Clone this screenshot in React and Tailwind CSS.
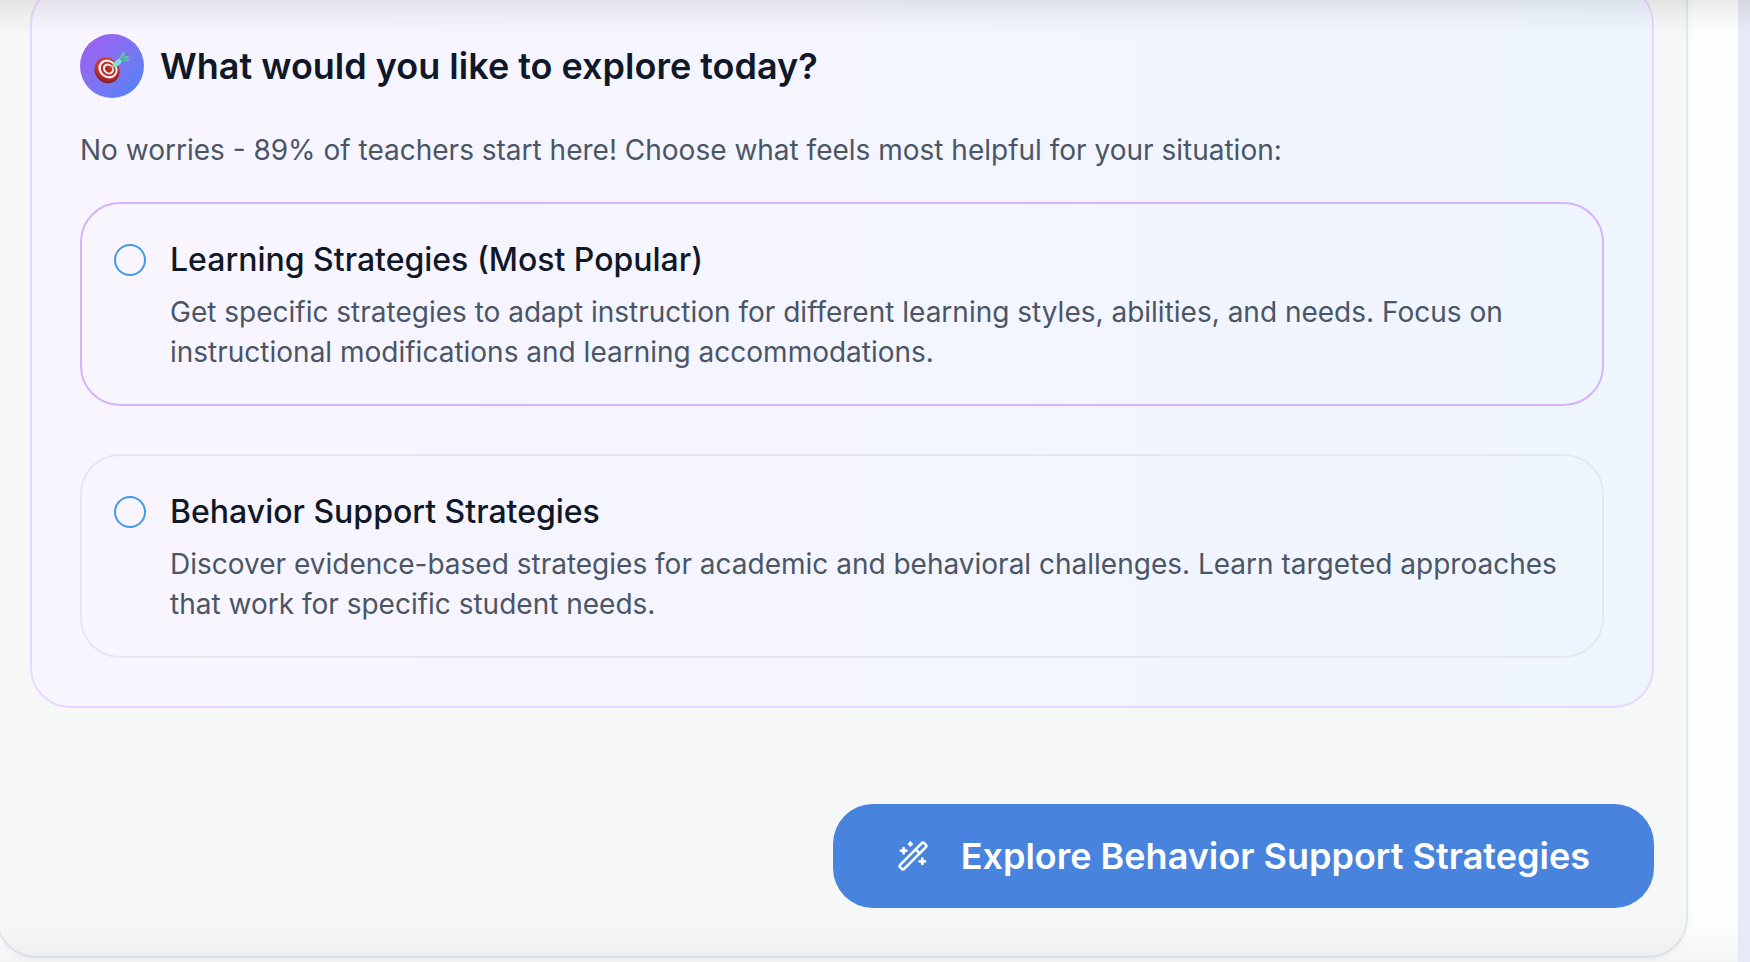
import { WandSparkles } from "lucide-react";

const options = [
  {
    id: "learning",
    title: "Learning Strategies (Most Popular)",
    text: "Get specific strategies to adapt instruction for different learning styles, abilities, and needs. Focus on instructional modifications and learning accommodations.",
    border: "border-[#d3b4f8]",
  },
  {
    id: "behavior",
    title: "Behavior Support Strategies",
    text: "Discover evidence-based strategies for academic and behavioral challenges. Learn targeted approaches that work for specific student needs.",
    border: "border-[#e5e7eb]",
  },
];

function TargetIcon() {
  return (
    <svg viewBox="0 -1 36 36" className="size-9" aria-hidden="true">
      <defs>
        <linearGradient id="rim" x1="0" y1="0" x2="1" y2="1">
          <stop offset="0" stopColor="#d8402f" />
          <stop offset="1" stopColor="#a32220" />
        </linearGradient>
      </defs>
      <ellipse cx="13" cy="22" rx="13" ry="11.6" transform="rotate(40 13 22)" fill="#7d1f22" />
      <ellipse cx="13.2" cy="20.6" rx="13" ry="11.4" transform="rotate(40 13.2 20.6)" fill="url(#rim)" />
      <ellipse cx="14" cy="20" rx="10.2" ry="8.8" transform="rotate(40 14 20)" fill="#f5efef" />
      <ellipse cx="14.2" cy="20" rx="7.9" ry="6.8" transform="rotate(40 14.2 20)" fill="#b92c2a" />
      <ellipse cx="14.4" cy="20" rx="5.9" ry="5" transform="rotate(40 14.4 20)" fill="#f5efef" />
      <ellipse cx="14.6" cy="20" rx="3.7" ry="3.2" transform="rotate(40 14.6 20)" fill="#b92c2a" />
      <path d="M15 20l4.6-3.8" stroke="#8a6a3a" strokeWidth="1" />
      <path d="M18 15.2l3.2 2.8-2.6 1z" fill="#e9b43c" />
      <path d="M18.6 15.8c1.6-3 4.6-5.6 8.4-7l1.8 2c-1.6 3.6-4.6 6.4-8 7.8z" fill="#7fdce0" />
      <path d="M26.2 10.4c-.2-3.2.8-5.8 3.2-7.6l1.6.6-.2 3.4 3.6.2.8 1.4-2.6 1.2 3 1-.2 1c-2.8 1-5.6 1.2-8.4.4z" fill="#68bdb8" />
      <path d="M26.8 10.6l4.2-4.2M27.8 11l5.4-1.4" stroke="#35807f" strokeWidth=".7" />
    </svg>
  );
}

function Option({ id, title, text, border }) {
  return (
    <label
      htmlFor={id}
      className={`flex cursor-pointer items-start gap-6 rounded-[40px] border-2 p-8 ${border}`}
    >
      <input
        id={id}
        type="radio"
        name="strategy"
        className="mt-2 size-8 shrink-0 appearance-none rounded-full border-2 border-[#4299e9] checked:border-[10px]"
      />
      <span className="flex min-w-0 flex-col gap-2">
        <span className="text-[32px] leading-[48px] font-medium text-gray-900">{title}</span>
        <span className="text-[28px] leading-[40px] text-gray-600">{text}</span>
      </span>
    </label>
  );
}

export default function App() {
  return (
    <div className="relative min-h-screen overflow-hidden bg-[#e6eaf6] pr-3 font-['Inter',sans-serif]">
      <main className="flow-root min-h-screen bg-[#fdfefe] pr-[50px]">
        <div className="-mt-12 -ml-1 rounded-[40px] border-2 border-[#e1e8ef] bg-[#f6f8f8] px-8 pt-[30px] pb-12 shadow-[0_2px_6px_rgba(0,0,0,0.04)]">
          <section className="rounded-[40px] border-2 border-[#e8d7fd] bg-linear-to-r from-[#f9f5ff] to-[#eff5ff] p-12">
            <header className="mb-8 flex items-center gap-4">
              <div className="flex size-16 items-center justify-center rounded-full bg-linear-to-br from-[#a35bf0] to-[#4485f4]">
                <TargetIcon />
              </div>
              <h2 className="text-[36px] leading-[56px] font-semibold text-gray-900">
                What would you like to explore today?
              </h2>
            </header>
            <p className="mb-8 text-[28px] leading-[40px] text-gray-600">
              No worries - 89% of teachers start here! Choose what feels most helpful for your situation:
            </p>
            <div className="flex flex-col gap-12">
              {options.map((option) => (
                <Option key={option.id} {...option} />
              ))}
            </div>
          </section>
          <div className="mt-24 flex justify-end">
            <button
              type="button"
              className="flex h-[104px] items-center gap-8 rounded-[40px] bg-[#4883dd] px-16 text-[36px] font-semibold text-white"
            >
              <WandSparkles size={32} strokeWidth={2} />
              Explore Behavior Support Strategies
            </button>
          </div>
        </div>
      </main>
      <div className="pointer-events-none absolute inset-x-0 top-0 h-9 bg-linear-to-b from-black/8 via-black/3 to-transparent" />
      <div className="pointer-events-none absolute right-3 bottom-0 left-0 h-14 bg-linear-to-t from-black/4 via-black/1 to-transparent" />
    </div>
  );
}
